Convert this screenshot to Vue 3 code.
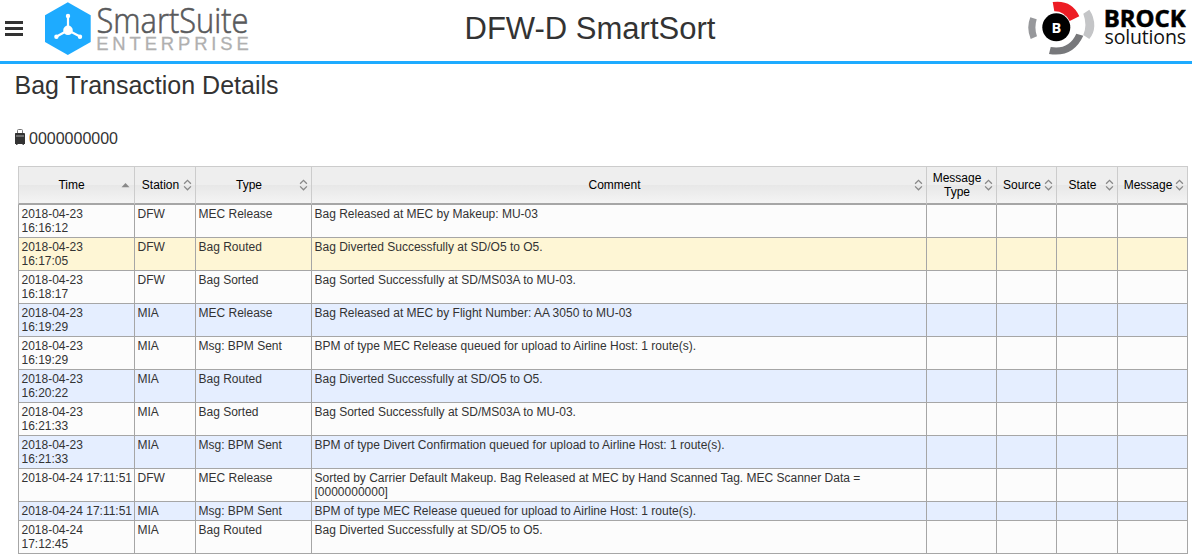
<script setup>
const columns = [
  { key: 'time', label: 'Time', width: 116, sorted: true },
  { key: 'station', label: 'Station', width: 61 },
  { key: 'type', label: 'Type', width: 116 },
  { key: 'comment', label: 'Comment', width: 615 },
  { key: 'messageType', label: 'Message Type', width: 70 },
  { key: 'source', label: 'Source', width: 60 },
  { key: 'state', label: 'State', width: 61 },
  { key: 'message', label: 'Message', width: 70 },
]

const rows = [
  { time: '2018-04-23 16:16:12', station: 'DFW', type: 'MEC Release', comment: 'Bag Released at MEC by Makeup: MU-03' },
  { time: '2018-04-23 16:17:05', station: 'DFW', type: 'Bag Routed', comment: 'Bag Diverted Successfully at SD/O5 to O5.', tone: 'hover' },
  { time: '2018-04-23 16:18:17', station: 'DFW', type: 'Bag Sorted', comment: 'Bag Sorted Successfully at SD/MS03A to MU-03.' },
  { time: '2018-04-23 16:19:29', station: 'MIA', type: 'MEC Release', comment: 'Bag Released at MEC by Flight Number: AA 3050 to MU-03', tone: 'alt' },
  { time: '2018-04-23 16:19:29', station: 'MIA', type: 'Msg: BPM Sent', comment: 'BPM of type MEC Release queued for upload to Airline Host: 1 route(s).' },
  { time: '2018-04-23 16:20:22', station: 'MIA', type: 'Bag Routed', comment: 'Bag Diverted Successfully at SD/O5 to O5.', tone: 'alt' },
  { time: '2018-04-23 16:21:33', station: 'MIA', type: 'Bag Sorted', comment: 'Bag Sorted Successfully at SD/MS03A to MU-03.' },
  { time: '2018-04-23 16:21:33', station: 'MIA', type: 'Msg: BPM Sent', comment: 'BPM of type Divert Confirmation queued for upload to Airline Host: 1 route(s).', tone: 'alt' },
  { time: '2018-04-24 17:11:51', station: 'DFW', type: 'MEC Release', comment: 'Sorted by Carrier Default Makeup. Bag Released at MEC by Hand Scanned Tag. MEC Scanner Data = [0000000000]', inline: true },
  { time: '2018-04-24 17:11:51', station: 'MIA', type: 'Msg: BPM Sent', comment: 'BPM of type MEC Release queued for upload to Airline Host: 1 route(s).', tone: 'alt', inline: true },
  { time: '2018-04-24 17:12:45', station: 'MIA', type: 'Bag Routed', comment: 'Bag Diverted Successfully at SD/O5 to O5.' },
]
</script>

<template>
  <div class="page">
    <header class="topbar">
      <div class="left">
        <button class="menu" aria-label="Menu"><i></i><i></i><i></i></button>
        <svg class="suite" width="206" height="58" viewBox="0 0 206 58">
          <path d="M22.8 2.3L45.7 15.2V42L22.8 55L0 42V15.2Z" fill="#1eabff" />
          <g stroke="#fff" stroke-width="2.2" fill="#fff">
            <path d="M23 30.3V16M23 30.3L11.7 36.5M23 30.3L35 36.5" />
            <circle cx="23" cy="30.3" r="3.7" />
            <circle cx="23" cy="15.9" r="1.1" />
            <circle cx="11.4" cy="36.7" r="1.1" />
            <circle cx="35" cy="36.7" r="1.1" />
          </g>
          <text class="suite-name" x="51.5" y="33.1" textLength="152" lengthAdjust="spacingAndGlyphs">SmartSuite</text>
          <text class="suite-sub" x="51.2" y="49.7" textLength="152.6" lengthAdjust="spacing">ENTERPRISE</text>
        </svg>
      </div>
      <h1>DFW-D SmartSort</h1>
      <svg class="brock" width="164" height="58" viewBox="1028 0 164 58">
        <path d="M1052.7 2Q1072 -.5 1079.3 16.3L1069.7 21Q1064 11 1054.3 11.3Z" fill="#ed1c24" />
        <path d="M1083.3 13.7L1089.3 9.7Q1094.4 17 1094.3 26Q1094 33.5 1089.3 39L1083.3 35Q1087.5 25 1083.3 13.7Z" fill="#c4c5c7" />
        <path d="M1030.3 17.3L1036.7 19.3Q1034 28 1037 36.3L1030.7 39Q1026 28 1030.3 17.3Z" fill="#97989b" />
        <path d="M1076.3 33.7L1083.3 35.7Q1073 58 1049 54L1050.7 47Q1069 50 1076.3 33.7Z" fill="#77787b" />
        <circle cx="1056.3" cy="27.3" r="14" fill="#000" />
        <text class="badge" x="1056.3" y="32.6" text-anchor="middle">B</text>
        <text class="brock-name" x="1103.7" y="26.8" textLength="82" lengthAdjust="spacingAndGlyphs">BROCK</text>
        <text class="brock-sub" x="1104.5" y="43.9" textLength="81.5" lengthAdjust="spacing">solutions</text>
      </svg>
    </header>

    <main>
      <h2>Bag Transaction Details</h2>
      <p class="bag">
        <svg width="12" height="17" viewBox="0 0 12 17">
          <path d="M3.5 4V1.5Q3.5 .5 4.5 .5H7.5Q8.5 .5 8.5 1.5V4" fill="none" stroke="#777" />
          <path d="M1.5 4H10Q11 4 11 5V15H1V5Q1 4 1.5 4Z" fill="#333" />
          <path d="M2 7H10" stroke="#aaa" />
          <path d="M2 15.5H3.5M8.5 15.5H10" stroke="#555" />
        </svg>
        <span>0000000000</span>
      </p>

      <table>
        <colgroup>
          <col class="first" />
          <col v-for="c in columns.slice(1)" :key="c.key" :style="{ width: c.width + 'px' }" />
        </colgroup>
        <thead>
          <tr>
            <th v-for="c in columns" :key="c.key">
              <div class="head">
                <span>{{ c.label }}</span>
                <svg v-if="c.sorted" width="9" height="12" viewBox="0 0 9 12"><path d="M.5 8.2L4.5 4L8.5 8.2Z" fill="#888" /></svg>
                <svg v-else width="9" height="12" viewBox="0 0 9 12"><path d="M1.1 4.8L4.5 1.4L7.9 4.8M1.1 7.4L4.5 10.8L7.9 7.4" fill="none" stroke="#888" stroke-width="1.3" /></svg>
              </div>
            </th>
          </tr>
        </thead>
        <tbody>
          <tr v-for="(r, i) in rows" :key="i" :class="r.tone">
            <td v-for="c in columns" :key="c.key" :class="{ nowrap: r.inline && c.key === 'time', stamp: c.key === 'time' && !r.inline, comment: c.key === 'comment' }">{{ r[c.key] }}</td>
          </tr>
        </tbody>
      </table>
    </main>
  </div>
</template>

<style>
body { background: #fff; }
</style>

<style scoped>
.page { font-family: "Liberation Sans", Arial, sans-serif; color: #333; height: 559px; overflow: hidden; }
.topbar { box-sizing: border-box; height: 64px; border-bottom: 3px solid #1eabff; display: grid; grid-template-columns: 464.5px 1fr 164px; align-items: start; }
.left { display: flex; align-items: flex-start; }
.menu { flex: none; border: 0; background: none; padding: 0; margin: 21px 22px 0 5px; width: 18px; display: flex; flex-direction: column; gap: 3px; }
.menu i { height: 3px; background: #333; }
.suite { overflow: visible; }
.suite-name { font: 300 35px/1 "Open Sans", sans-serif; fill: #58595b; stroke: #58595b; stroke-width: .6px; }
.suite-sub { font: 18.4px/1 "Liberation Sans", sans-serif; fill: #b0b0b0; stroke: #b0b0b0; stroke-width: .3px; }
h1 { margin: 12px 0 0; font-size: 31px; line-height: 34px; font-weight: 400; white-space: nowrap; }
.badge { font: 700 14.5px/1 "Open Sans", sans-serif; fill: #fff; }
.brock-name { font: 700 23.5px/1 "Open Sans", sans-serif; fill: #000; stroke: #000; stroke-width: .5px; }
.brock-sub { font: 400 19.5px/1 "Open Sans", sans-serif; fill: #111; }
h2 { margin: 7px 0 0 14.5px; font-size: 25px; line-height: 29px; font-weight: 400; }
.bag { margin: 29px 0 0 14px; height: 20px; display: flex; align-items: center; gap: 3px; font-size: 16px; line-height: 20px; }
.bag svg { margin-top: -3px; }
table { margin: 17px 0 0 18px; width: 1170px; table-layout: fixed; border-collapse: separate; border-spacing: 0; font-size: 12px; line-height: 14px; }
.first { width: 117px; }
th { box-sizing: border-box; height: 39px; padding: 0 4px 0 3px; font-weight: 400; color: #000; background: linear-gradient(#eee 0 50%, #e7e7e7 50%, #f4f4f4 100%); border: solid #ccc; border-width: 1px 1px 2px 0; border-bottom-color: #a6a6a6; vertical-align: middle; }
.head { display: flex; align-items: center; }
.head span { flex: 1; text-align: center; }
.head svg { flex: none; margin-right: -1px; }
th:first-child { border-left-width: 1px; }
th:first-child .head svg { margin-right: 0; }
td { padding: 2px 0 2px 2.5px; height: 14px; vertical-align: top; background: #fcfcfc; border: solid #a6a6a6; border-width: 0 1px 1px 0; }
td:first-child { border-left-width: 1px; }
.alt td { background: #e5eeff; }
.hover td { background: #fef6d5; }
.nowrap { white-space: nowrap; }
.stamp { padding-right: 30px; }
.comment { padding-right: 50px; }
</style>
